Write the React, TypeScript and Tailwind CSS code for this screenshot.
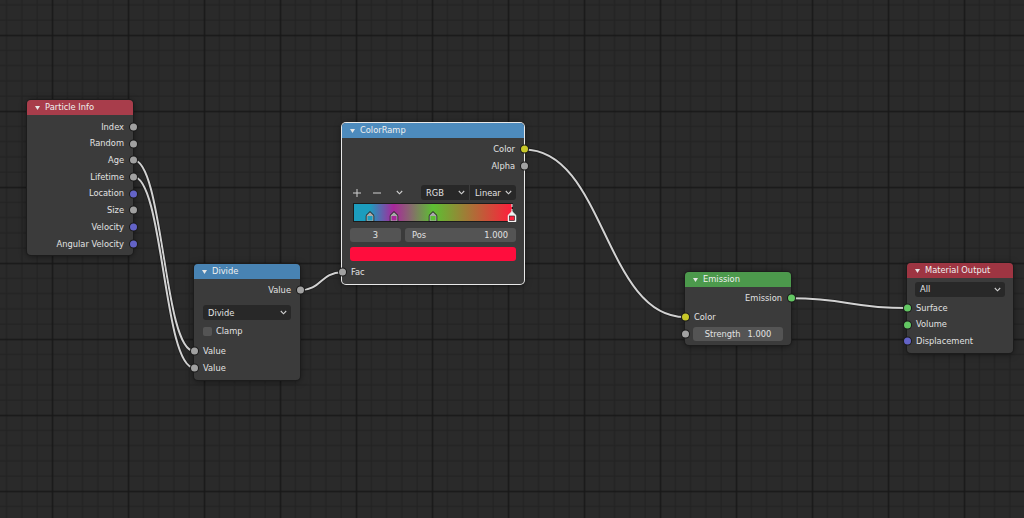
import type { ReactNode } from "react";

import clsx from "clsx";

type SocketKind = "float" | "vector" | "color" | "shader";

const SOCKET_COLOR: Record<SocketKind, string> = {
  float: "bg-[#a1a1a1]",
  vector: "bg-[#6363c7]",
  color: "bg-[#c7c729]",
  shader: "bg-[#63c763]",
};

// blender style noodle: horizontal handles at half the x distance
function wirePath(x1: number, y1: number, x2: number, y2: number) {
  const h = Math.abs(x2 - x1) * 0.5;
  return `M${x1} ${y1} C${x1 + h} ${y1} ${x2 - h} ${y2} ${x2} ${y2}`;
}

const WIRES = [
  wirePath(133, 159.8, 194, 351),
  wirePath(133, 176.5, 194, 367.7),
  wirePath(300, 290.3, 342, 272.2),
  wirePath(524, 149.4, 685, 317),
  wirePath(791, 298.3, 907, 308),
];

const MINOR = [15.2, 30.4, 45.6, 60.8];

function Backdrop() {
  return (
    <svg className="absolute inset-0" width="1024" height="518">
      <defs>
        <pattern id="grid" x="51.7" y="34.7" width="76" height="76" patternUnits="userSpaceOnUse">
          {MINOR.map((p) => (
            <g key={p} fill="#212121">
              <rect x={p} y="0" width="1" height="76" />
              <rect x="0" y={p} width="76" height="1" />
            </g>
          ))}
          <rect x="0" y="0" width="1.5" height="76" fill="#181818" />
          <rect x="0" y="0" width="76" height="1.5" fill="#181818" />
        </pattern>
      </defs>
      <rect width="1024" height="518" fill="url(#grid)" />
      {WIRES.map((d) => (
        <g key={d} fill="none" strokeLinecap="round">
          <path d={d} stroke="#1a1a1a" strokeOpacity="0.7" strokeWidth="3.6" />
          <path d={d} stroke="#d2d2d2" strokeWidth="2" />
        </g>
      ))}
    </svg>
  );
}

function Socket({ kind, side }: { kind: SocketKind; side: "left" | "right" }) {
  return (
    <span
      className={clsx(
        "absolute top-1/2 h-[7px] w-[7px] -translate-y-1/2 rounded-full ring-1 ring-[#1b1b1b]",
        side === "left" ? "-left-[3.5px]" : "-right-[3.5px]",
        SOCKET_COLOR[kind],
      )}
    />
  );
}

function Chevron() {
  return (
    <svg width="7" height="5" viewBox="0 0 7 5" className="shrink-0">
      <polyline points="0.8,1 3.5,3.8 6.2,1" fill="none" stroke="#d0d0d0" strokeWidth="1.1" />
    </svg>
  );
}

function OutRow({ label, kind }: { label: string; kind: SocketKind }) {
  return (
    <div className="relative flex h-[16.7px] items-center justify-end pr-[9px]">
      <span>{label}</span>
      <Socket kind={kind} side="right" />
    </div>
  );
}

function InRow({ label, kind, className }: { label: string; kind: SocketKind; className?: string }) {
  return (
    <div className={clsx("relative flex h-[16.7px] items-center pl-[9px]", className)}>
      <span>{label}</span>
      <Socket kind={kind} side="left" />
    </div>
  );
}

function Dropdown({ label, className }: { label: string; className?: string }) {
  return (
    <div
      className={clsx(
        "flex h-[15px] items-center justify-between rounded-[3px] bg-[#282828] pr-[4px] pl-[5px]",
        className,
      )}
    >
      <span>{label}</span>
      <Chevron />
    </div>
  );
}

interface NodeProps {
  title: string;
  pos: string;
  header: string;
  active?: boolean;
  children: ReactNode;
}

function Node({ title, pos, header, active = false, children }: NodeProps) {
  return (
    <div
      className={clsx(
        "absolute rounded-[4px] bg-[#3b3b3b] shadow-[0_1px_7px_rgba(0,0,0,0.55)] ring-1",
        active ? "ring-[#e8e8e8]" : "ring-[#1c1c1c]",
        pos,
      )}
    >
      <div className={clsx("flex h-[15px] items-center gap-[5px] rounded-t-[4px] pl-[8px] text-[#efefef]", header)}>
        <svg width="5" height="4" viewBox="0 0 5 4">
          <polygon points="0,0 5,0 2.5,4" fill="#e6e6e6" />
        </svg>
        <span>{title}</span>
      </div>
      {children}
    </div>
  );
}

const STOPS = [
  { at: "left-[10%]", color: "#1c9dbe" },
  { at: "left-[25%]", color: "#a8279b" },
  { at: "left-[50%]", color: "#5cbf32" },
];

function Marker({ color, active = false }: { color: string; active?: boolean }) {
  return (
    <svg width="9" height="11" viewBox="0 0 9 11">
      <path
        d="M0.5 10.5 V4.5 L4.5 0.6 L8.5 4.5 V10.5 Z"
        fill={active ? "#f2f2f2" : "#a9a9a9"}
        stroke={active ? "#f2f2f2" : "#141414"}
        strokeWidth="1"
      />
      <rect x="2" y="5" width="5" height="4.5" fill={color} stroke={active ? "#1a1a1a" : "none"} strokeWidth="0.6" />
    </svg>
  );
}

function ColorRampWidget() {
  return (
    <div className="relative mx-[12px] mt-[3.5px] h-[17px] bg-[linear-gradient(to_right,#1c9dbe_10%,#a8279b_25%,#5cbf32_50%,#ff1e3c_100%)] ring-1 ring-[#1c1c1c]">
      {STOPS.map((s) => (
        <div key={s.at} className={clsx("absolute bottom-[-1px] -translate-x-1/2", s.at)}>
          <Marker color={s.color} />
        </div>
      ))}
      <div className="absolute top-0 right-0 bottom-[9px] w-0 translate-x-1/2 border-l border-dashed border-[#f2f2f2]" />
      <div className="absolute right-0 bottom-[-1px] translate-x-1/2">
        <Marker color="#ff1e3c" active />
      </div>
    </div>
  );
}

function ParticleInfo() {
  return (
    <Node title="Particle Info" pos="left-[27px] top-[100px] w-[106px]" header="bg-[#a83d4b]">
      <div className="pt-[3.5px] pb-[3px]">
        <OutRow label="Index" kind="float" />
        <OutRow label="Random" kind="float" />
        <OutRow label="Age" kind="float" />
        <OutRow label="Lifetime" kind="float" />
        <OutRow label="Location" kind="vector" />
        <OutRow label="Size" kind="float" />
        <OutRow label="Velocity" kind="vector" />
        <OutRow label="Angular Velocity" kind="vector" />
      </div>
    </Node>
  );
}

function DivideNode() {
  return (
    <Node title="Divide" pos="left-[194px] top-[264px] w-[106px]" header="bg-[#4883b3]">
      <div className="pt-[3px] pb-[4px]">
        <OutRow label="Value" kind="float" />
        <Dropdown label="Divide" className="mx-[9px] mt-[6.5px]" />
        <div className="mt-[2.5px] flex h-[16.7px] items-center gap-[4px] pl-[9px]">
          <span className="h-[9px] w-[9px] rounded-[2px] bg-[#545454]" />
          <span>Clamp</span>
        </div>
        <InRow label="Value" kind="float" className="mt-[3.3px]" />
        <InRow label="Value" kind="float" />
      </div>
    </Node>
  );
}

function ColorRampNode() {
  return (
    <Node title="ColorRamp" pos="left-[342px] top-[123px] w-[182px]" header="bg-[#4d8bbd]" active>
      <div className="pt-[3px] pb-[3.5px]">
        <OutRow label="Color" kind="color" />
        <OutRow label="Alpha" kind="float" />
        <div className="mx-[8px] mt-[11px] flex h-[15px] items-center">
          <div className="flex w-[14px] justify-center">
            <svg width="8" height="8" viewBox="0 0 8 8">
              <path d="M4 0 V8 M0 4 H8" stroke="#d0d0d0" strokeWidth="1" />
            </svg>
          </div>
          <div className="ml-[6px] flex w-[14px] justify-center">
            <svg width="8" height="8" viewBox="0 0 8 8">
              <path d="M0 4 H8" stroke="#d0d0d0" strokeWidth="1" />
            </svg>
          </div>
          <div className="ml-[8px] flex w-[14px] justify-center">
            <Chevron />
          </div>
          <Dropdown label="RGB" className="ml-[15px] w-[48px] rounded-r-none" />
          <Dropdown label="Linear" className="ml-[1px] flex-1 rounded-l-none" />
        </div>
        <ColorRampWidget />
        <div className="mx-[8px] mt-[7px] flex h-[14px] gap-[4px]">
          <div className="flex w-[51px] items-center justify-center rounded-[3px] bg-[#545454]">3</div>
          <div className="flex flex-1 items-center justify-between rounded-[3px] bg-[#545454] pr-[8px] pl-[7px]">
            <span>Pos</span>
            <span>1.000</span>
          </div>
        </div>
        <div className="mx-[8px] mt-[5.5px] h-[14px] rounded-[3px] bg-[#ff0d3d]" />
        <InRow label="Fac" kind="float" className="mt-[2.5px]" />
      </div>
    </Node>
  );
}

function EmissionNode() {
  return (
    <Node title="Emission" pos="left-[685px] top-[272px] w-[106px]" header="bg-[#4c994c]">
      <div className="pt-[3px] pb-[4px]">
        <OutRow label="Emission" kind="shader" />
        <InRow label="Color" kind="color" className="mt-[2px]" />
        <div className="relative mt-[1.6px] h-[14px] px-[8px]">
          <div className="flex h-full items-center justify-center gap-[7px] rounded-[3px] bg-[#545454]">
            <span>Strength</span>
            <span>1.000</span>
          </div>
          <Socket kind="float" side="left" />
        </div>
      </div>
    </Node>
  );
}

function MaterialOutputNode() {
  return (
    <Node title="Material Output" pos="left-[907px] top-[263px] w-[106px]" header="bg-[#9e3542]">
      <div className="pt-[4px] pb-[3px]">
        <Dropdown label="All" className="mx-[8px]" />
        <InRow label="Surface" kind="shader" className="mt-[2.6px]" />
        <InRow label="Volume" kind="shader" />
        <InRow label="Displacement" kind="vector" />
      </div>
    </Node>
  );
}

export default function App() {
  return (
    <div className="relative h-[518px] w-[1024px] overflow-hidden bg-[#2a2a2a] font-['DejaVu_Sans',sans-serif] text-[8.3px] leading-none text-[#e2e2e2]">
      <Backdrop />
      <ParticleInfo />
      <DivideNode />
      <ColorRampNode />
      <EmissionNode />
      <MaterialOutputNode />
    </div>
  );
}
